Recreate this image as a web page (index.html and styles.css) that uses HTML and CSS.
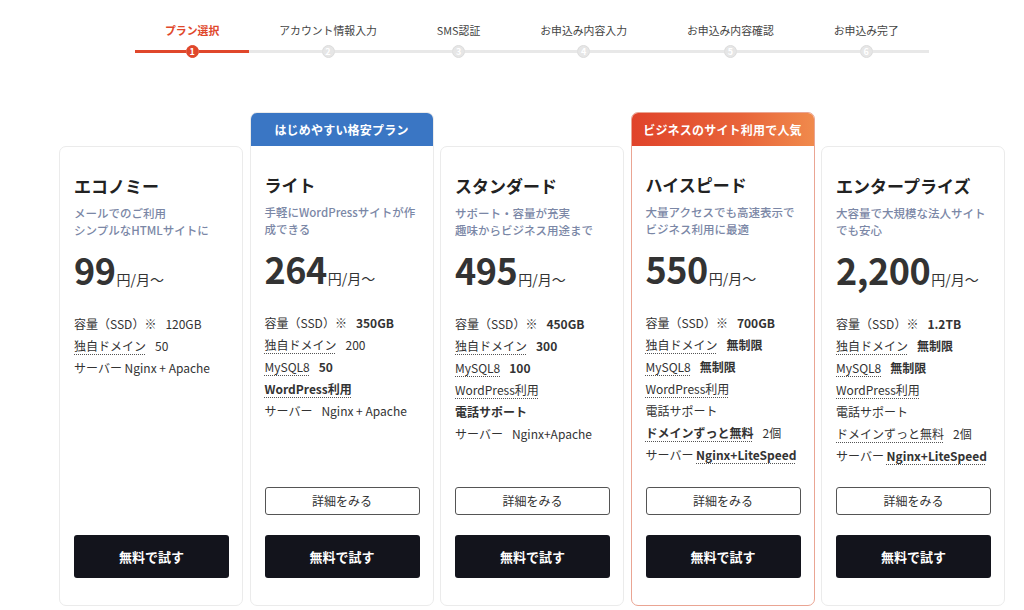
FILE: index.html
```html
<!DOCTYPE html>
<html lang="ja">
<head>
<meta charset="utf-8">
<title>プラン選択</title>
<link rel="stylesheet" href="styles.css">
</head>
<body>
<div class="page">
  <ol class="stepper">
    <li class="step active"><span class="step-label">プラン選択</span><span class="track"><span class="dot">1</span></span></li>
    <li class="step"><span class="step-label">アカウント情報入力</span><span class="track"><span class="dot">2</span></span></li>
    <li class="step"><span class="step-label">SMS認証</span><span class="track"><span class="dot">3</span></span></li>
    <li class="step"><span class="step-label">お申込み内容入力</span><span class="track"><span class="dot">4</span></span></li>
    <li class="step"><span class="step-label">お申込み内容確認</span><span class="track"><span class="dot">5</span></span></li>
    <li class="step"><span class="step-label">お申込み完了</span><span class="track"><span class="dot">6</span></span></li>
  </ol>

  <div class="plans">
    <section class="card no-badge">
      <div class="card-body">
        <h2 class="plan-name">エコノミー</h2>
        <p class="plan-desc">メールでのご利用<br>シンプルなHTMLサイトに</p>
        <p class="price"><span class="num">99</span><span class="unit">円/月〜</span></p>
        <ul class="specs">
          <li>容量（SSD）※<span class="val">120GB</span></li>
          <li><span class="dot-u">独自ドメイン</span><span class="val">50</span></li>
          <li>サーバー Nginx + Apache</li>
        </ul>
        <div class="actions">
          <a class="btn-try">無料で試す</a>
        </div>
      </div>
    </section>

    <section class="card">
      <div class="badge badge-blue">はじめやすい格安プラン</div>
      <div class="card-body">
        <h2 class="plan-name">ライト</h2>
        <p class="plan-desc">手軽にWordPressサイトが作成できる</p>
        <p class="price"><span class="num">264</span><span class="unit">円/月〜</span></p>
        <ul class="specs">
          <li>容量（SSD）※<span class="val b">350GB</span></li>
          <li><span class="dot-u">独自ドメイン</span><span class="val">200</span></li>
          <li><span class="dot-u">MySQL8</span><span class="val b">50</span></li>
          <li><span class="dot-u b">WordPress利用</span></li>
          <li>サーバー<span class="val">Nginx + Apache</span></li>
        </ul>
        <div class="actions">
          <a class="btn-detail">詳細をみる</a>
          <a class="btn-try">無料で試す</a>
        </div>
      </div>
    </section>

    <section class="card no-badge">
      <div class="card-body">
        <h2 class="plan-name">スタンダード</h2>
        <p class="plan-desc">サポート・容量が充実<br>趣味からビジネス用途まで</p>
        <p class="price"><span class="num">495</span><span class="unit">円/月〜</span></p>
        <ul class="specs">
          <li>容量（SSD）※<span class="val b">450GB</span></li>
          <li><span class="dot-u">独自ドメイン</span><span class="val b">300</span></li>
          <li><span class="dot-u">MySQL8</span><span class="val b">100</span></li>
          <li><span class="dot-u">WordPress利用</span></li>
          <li class="b">電話サポート</li>
          <li>サーバー<span class="val">Nginx+Apache</span></li>
        </ul>
        <div class="actions">
          <a class="btn-detail">詳細をみる</a>
          <a class="btn-try">無料で試す</a>
        </div>
      </div>
    </section>

    <section class="card featured">
      <div class="badge badge-red">ビジネスのサイト利用で人気</div>
      <div class="card-body">
        <h2 class="plan-name">ハイスピード</h2>
        <p class="plan-desc">大量アクセスでも高速表示で<br>ビジネス利用に最適</p>
        <p class="price"><span class="num">550</span><span class="unit">円/月〜</span></p>
        <ul class="specs">
          <li>容量（SSD）※<span class="val b">700GB</span></li>
          <li><span class="dot-u">独自ドメイン</span><span class="val b">無制限</span></li>
          <li><span class="dot-u">MySQL8</span><span class="val b">無制限</span></li>
          <li><span class="dot-u">WordPress利用</span></li>
          <li>電話サポート</li>
          <li><span class="dot-u b">ドメインずっと無料</span><span class="val">2個</span></li>
          <li>サーバー <span class="dot-u b">Nginx+LiteSpeed</span></li>
        </ul>
        <div class="actions">
          <a class="btn-detail">詳細をみる</a>
          <a class="btn-try">無料で試す</a>
        </div>
      </div>
    </section>

    <section class="card no-badge">
      <div class="card-body">
        <h2 class="plan-name">エンタープライズ</h2>
        <p class="plan-desc">大容量で大規模な法人サイトでも安心</p>
        <p class="price"><span class="num">2,200</span><span class="unit">円/月〜</span></p>
        <ul class="specs">
          <li>容量（SSD）※<span class="val b">1.2TB</span></li>
          <li><span class="dot-u">独自ドメイン</span><span class="val b">無制限</span></li>
          <li><span class="dot-u">MySQL8</span><span class="val b">無制限</span></li>
          <li><span class="dot-u">WordPress利用</span></li>
          <li>電話サポート</li>
          <li><span class="dot-u">ドメインずっと無料</span><span class="val">2個</span></li>
          <li>サーバー <span class="dot-u b">Nginx+LiteSpeed</span></li>
        </ul>
        <div class="actions">
          <a class="btn-detail">詳細をみる</a>
          <a class="btn-try">無料で試す</a>
        </div>
      </div>
    </section>
  </div>
</div>
</body>
</html>
```

FILE: styles.css
```css
* { box-sizing: border-box; }

html, body {
  margin: 0;
  padding: 0;
  background: #fff;
}

body {
  font-family: "Noto Sans CJK JP", "Noto Sans", sans-serif;
  color: #333;
  width: 1024px;
  height: 610px;
  overflow: hidden;
}

.page {
  padding: 22px 0 0 0;
}

/* Stepper */
.stepper {
  list-style: none;
  margin: 0 0 0 135px;
  padding: 0;
  display: flex;
}

.step {
  display: flex;
  flex-direction: column;
  align-items: stretch;
}

.step-label {
  padding: 0 30px;
  font-size: 10.85px;
  line-height: 16px;
  color: #444;
  text-align: center;
  white-space: nowrap;
}

.step.active .step-label {
  color: #e0472b;
  font-weight: 700;
}

.track {
  margin-top: 7px;
  height: 13px;
  display: flex;
  align-items: center;
}

.track::before,
.track::after {
  content: "";
  flex: 1;
  height: 3px;
  background: #e8e8e8;
}

.step.active .track::before,
.step.active .track::after {
  background: #e0472b;
}

.dot {
  width: 13px;
  height: 13px;
  border-radius: 50%;
  background: #e6e6e6;
  border: 1px solid #dcdcdc;
  color: #fff;
  font-size: 9px;
  line-height: 11px;
  text-align: center;
  font-weight: 700;
}

.step.active .dot {
  background: #e0472b;
  border-color: #e0472b;
}

/* Plans */
.plans {
  margin: 54px 0 0 59px;
  width: 946px;
  display: flex;
  gap: 6.5px;
  align-items: stretch;
  height: 494px;
}

.card {
  flex: 1 1 0;
  display: flex;
  flex-direction: column;
  border: 1px solid #ebebeb;
  border-radius: 7px;
  overflow: hidden;
  background: #fff;
}

.card.no-badge {
  margin-top: 34px;
}

.card.featured {
  border-color: #eaa593;
}

.badge {
  height: 33px;
  flex: none;
  color: #fff;
  font-size: 12px;
  font-weight: 700;
  line-height: 33px;
  text-align: center;
  letter-spacing: 0.2px;
}

.badge-blue {
  background: #3a76c4;
}

.badge-red {
  background: linear-gradient(90deg, #e0432a 0%, #e8643a 60%, #f08a4c 100%);
}

.card-body {
  flex: 1;
  display: flex;
  flex-direction: column;
  padding: 27px 13px 27px 14px;
}

.plan-name {
  margin: 0;
  font-size: 17px;
  line-height: 24px;
  font-weight: 700;
  color: #222;
}

.plan-desc {
  margin: 7px 0 0;
  font-size: 11.5px;
  line-height: 17px;
  color: #7b87a6;
  font-weight: 500;
}

.price {
  margin: 8px 0 0;
  height: 44px;
  display: flex;
  align-items: baseline;
  color: #333;
}

.price .num {
  font-size: 36px;
  line-height: 44px;
  font-weight: 700;
  letter-spacing: -0.5px;
}

.price .unit {
  font-size: 14px;
  margin-left: 1px;
}

.specs {
  list-style: none;
  margin: 22px 0 0;
  padding: 0;
  font-size: 12px;
  line-height: 22px;
  color: #333;
}

.specs li {
  white-space: nowrap;
}

.val {
  margin-left: 9px;
}

.b {
  font-weight: 700;
}

.dot-u {
  text-decoration: underline dotted #555;
  text-underline-offset: 3px;
  text-decoration-thickness: 1px;
}

.actions {
  margin-top: auto;
  display: flex;
  flex-direction: column;
  gap: 20px;
}

.btn-detail {
  display: block;
  height: 28px;
  border: 1px solid #555;
  border-radius: 3px;
  font-size: 12px;
  line-height: 26px;
  text-align: center;
  color: #333;
}

.btn-try {
  display: block;
  height: 43px;
  background: #13141c;
  border-radius: 3px;
  color: #fff;
  font-size: 13px;
  font-weight: 700;
  line-height: 43px;
  text-align: center;
}
```
